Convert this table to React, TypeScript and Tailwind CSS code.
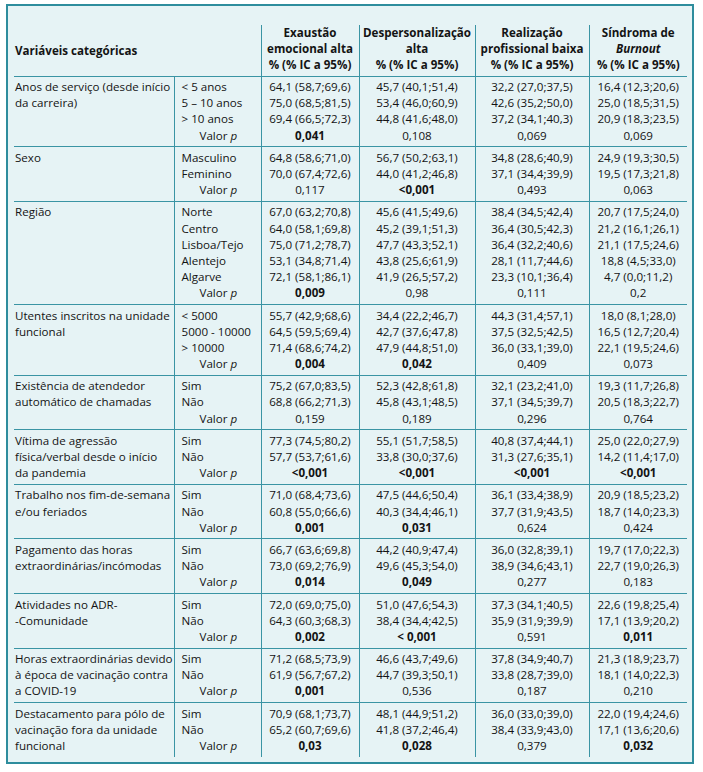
import React from "react";

type V = [string, boolean?];
type Section = {
  label: string[];
  cats: string[];
  vals: string[][]; // per category: 4 values
  p: V[];
};

const sections: Section[] = [
  {
    label: ["Anos de serviço (desde início", "da carreira)"],
    cats: ["< 5 anos", "5 – 10 anos", "> 10 anos"],
    vals: [
      ["64,1 (58,7;69,6)", "45,7 (40,1;51,4)", "32,2 (27,0;37,5)", "16,4 (12,3;20,6)"],
      ["75,0 (68,5;81,5)", "53,4 (46,0;60,9)", "42,6 (35,2;50,0)", "25,0 (18,5;31,5)"],
      ["69,4 (66,5;72,3)", "44,8 (41,6;48,0)", "37,2 (34,1;40,3)", "20,9 (18,3;23,5)"],
    ],
    p: [["0,041", true], ["0,108"], ["0,069"], ["0,069"]],
  },
  {
    label: ["Sexo"],
    cats: ["Masculino", "Feminino"],
    vals: [
      ["64,8 (58,6;71,0)", "56,7 (50,2;63,1)", "34,8 (28,6;40,9)", "24,9 (19,3;30,5)"],
      ["70,0 (67,4;72,6)", "44,0 (41,2;46,8)", "37,1 (34,4;39,9)", "19,5 (17,3;21,8)"],
    ],
    p: [["0,117"], ["<0,001", true], ["0,493"], ["0,063"]],
  },
  {
    label: ["Região"],
    cats: ["Norte", "Centro", "Lisboa/Tejo", "Alentejo", "Algarve"],
    vals: [
      ["67,0 (63,2;70,8)", "45,6 (41,5;49,6)", "38,4 (34,5;42,4)", "20,7 (17,5;24,0)"],
      ["64,0 (58,1;69,8)", "45,2 (39,1;51,3)", "36,4 (30,5;42,3)", "21,2 (16,1;26,1)"],
      ["75,0 (71,2;78,7)", "47,7 (43,3;52,1)", "36,4 (32,2;40,6)", "21,1 (17,5;24,6)"],
      ["53,1 (34,8;71,4)", "43,8 (25,6;61,9)", "28,1 (11,7;44,6)", "18,8 (4,5;33,0)"],
      ["72,1 (58,1;86,1)", "41,9 (26,5;57,2)", "23,3 (10,1;36,4)", "4,7 (0,0;11,2)"],
    ],
    p: [["0,009", true], ["0,98"], ["0,111"], ["0,2"]],
  },
  {
    label: ["Utentes inscritos na unidade", "funcional"],
    cats: ["< 5000", "5000 - 10000", "> 10000"],
    vals: [
      ["55,7 (42,9;68,6)", "34,4 (22,2;46,7)", "44,3 (31,4;57,1)", "18,0 (8,1;28,0)"],
      ["64,5 (59,5;69,4)", "42,7 (37,6;47,8)", "37,5 (32,5;42,5)", "16,5 (12,7;20,4)"],
      ["71,4 (68,6;74,2)", "47,9 (44,8;51,0)", "36,0 (33,1;39,0)", "22,1 (19,5;24,6)"],
    ],
    p: [["0,004", true], ["0,042", true], ["0,409"], ["0,073"]],
  },
  {
    label: ["Existência de atendedor", "automático de chamadas"],
    cats: ["Sim", "Não"],
    vals: [
      ["75,2 (67,0;83,5)", "52,3 (42,8;61,8)", "32,1 (23,2;41,0)", "19,3 (11,7;26,8)"],
      ["68,8 (66,2;71,3)", "45,8 (43,1;48,5)", "37,1 (34,5;39,7)", "20,5 (18,3;22,7)"],
    ],
    p: [["0,159"], ["0,189"], ["0,296"], ["0,764"]],
  },
  {
    label: ["Vítima de agressão", "física/verbal desde o início", "da pandemia"],
    cats: ["Sim", "Não"],
    vals: [
      ["77,3 (74,5;80,2)", "55,1 (51,7;58,5)", "40,8 (37,4;44,1)", "25,0 (22,0;27,9)"],
      ["57,7 (53,7;61,6)", "33,8 (30,0;37,6)", "31,3 (27,6;35,1)", "14,2 (11,4;17,0)"],
    ],
    p: [["<0,001", true], ["<0,001", true], ["<0,001", true], ["<0,001", true]],
  },
  {
    label: ["Trabalho nos fim-de-semana", "e/ou feriados"],
    cats: ["Sim", "Não"],
    vals: [
      ["71,0 (68,4;73,6)", "47,5 (44,6;50,4)", "36,1 (33,4;38,9)", "20,9 (18,5;23,2)"],
      ["60,8 (55,0;66,6)", "40,3 (34,4;46,1)", "37,7 (31,9;43,5)", "18,7 (14,0;23,3)"],
    ],
    p: [["0,001", true], ["0,031", true], ["0,624"], ["0,424"]],
  },
  {
    label: ["Pagamento das horas", "extraordinárias/incómodas"],
    cats: ["Sim", "Não"],
    vals: [
      ["66,7 (63,6;69,8)", "44,2 (40,9;47,4)", "36,0 (32,8;39,1)", "19,7 (17,0;22,3)"],
      ["73,0 (69,2;76,9)", "49,6 (45,3;54,0)", "38,9 (34,6;43,1)", "22,7 (19,0;26,3)"],
    ],
    p: [["0,014", true], ["0,049", true], ["0,277"], ["0,183"]],
  },
  {
    label: ["Atividades no ADR-", "-Comunidade"],
    cats: ["Sim", "Não"],
    vals: [
      ["72,0 (69,0;75,0)", "51,0 (47,6;54,3)", "37,3 (34,1;40,5)", "22,6 (19,8;25,4)"],
      ["64,3 (60,3;68,3)", "38,4 (34,4;42,5)", "35,9 (31,9;39,9)", "17,1 (13,9;20,2)"],
    ],
    p: [["0,002", true], ["< 0,001", true], ["0,591"], ["0,011", true]],
  },
  {
    label: ["Horas extraordinárias devido", "à época de vacinação contra", "a COVID-19"],
    cats: ["Sim", "Não"],
    vals: [
      ["71,2 (68,5;73,9)", "46,6 (43,7;49,6)", "37,8 (34,9;40,7)", "21,3 (18,9;23,7)"],
      ["61,9 (56,7;67,2)", "44,7 (39,3;50,1)", "33,8 (28,7;39,0)", "18,1 (14,0;22,3)"],
    ],
    p: [["0,001", true], ["0,536"], ["0,187"], ["0,210"]],
  },
  {
    label: ["Destacamento para pólo de", "vacinação fora da unidade", "funcional"],
    cats: ["Sim", "Não"],
    vals: [
      ["70,9 (68,1;73,7)", "48,1 (44,9;51,2)", "36,0 (33,0;39,0)", "22,0 (19,4;24,6)"],
      ["65,2 (60,7;69,6)", "41,8 (37,2;46,4)", "38,4 (33,9;43,0)", "17,1 (13,6;20,6)"],
    ],
    p: [["0,03", true], ["0,028", true], ["0,379"], ["0,032", true]],
  },
];

const Line = ({ children, className = "" }: { children: React.ReactNode; className?: string }) => (
  <div className={"leading-[16.2px] h-[16.2px] whitespace-nowrap " + className}>{children}</div>
);

export default function App() {
  return (
    <div className="bg-white w-[703px] h-[772px] pt-[4px] pl-[6px]" style={{ fontFamily: '"Open Sans", "Noto Sans", sans-serif' }}>
      <div className="w-[688px] h-[760px] border-2 border-[#2e8d9d] bg-[#e6f3f5] pt-[19px] pl-[6px] pr-[5px] text-[11.6px] text-[#141414]">
        <table className="table-fixed border-collapse w-[673px]">
          <colgroup>
            <col className="w-[160px]" />
            <col className="w-[87px]" />
            <col className="w-[98px]" />
            <col className="w-[116px]" />
            <col className="w-[114px]" />
            <col className="w-[98px]" />
          </colgroup>
          <thead>
            <tr className="border-b border-[#3a94a4]">
              <th colSpan={2} className="text-left align-middle font-bold pl-[1px] pt-[1px]">
                <Line>Variáveis categóricas</Line>
              </th>
              <th className="border-l border-[#3a94a4] align-bottom font-bold pb-[2px] text-center">
                <Line>Exaustão</Line>
                <Line>emocional alta</Line>
                <Line>% (% IC a 95%)</Line>
              </th>
              <th className="border-l border-[#3a94a4] align-bottom font-bold pb-[2px] text-center">
                <Line>Despersonalização</Line>
                <Line>alta</Line>
                <Line>% (% IC a 95%)</Line>
              </th>
              <th className="border-l border-[#3a94a4] align-bottom font-bold pb-[2px] text-center">
                <Line>Realização</Line>
                <Line>profissional baixa</Line>
                <Line>% (% IC a 95%)</Line>
              </th>
              <th className="border-l border-[#3a94a4] align-bottom font-bold pb-[2px] text-center">
                <Line>Síndroma de</Line>
                <Line><i>Burnout</i></Line>
                <Line>% (% IC a 95%)</Line>
              </th>
            </tr>
          </thead>
          <tbody>
            {sections.map((s, si) => (
              <tr key={si} className={si > 0 ? "border-t border-[#3a94a4]" : ""}>
                <td className="align-top pl-[1px] pt-[2.5px] pb-[2.5px]">
                  {s.label.map((l, i) => (
                    <Line key={i}>{l}</Line>
                  ))}
                </td>
                <td className="align-top border-l border-[#3a94a4] pl-[7px] pt-[2.5px] pb-[2.5px]">
                  {s.cats.map((c, i) => (
                    <Line key={i}>{c}</Line>
                  ))}
                  <Line className="pl-[18px]">
                    Valor <i>p</i>
                  </Line>
                </td>
                {[0, 1, 2, 3].map((ci) => (
                  <td key={ci} className="align-top border-l border-[#3a94a4] text-center pt-[2.5px] pb-[2.5px]">
                    {s.vals.map((row, ri) => (
                      <Line key={ri}>{row[ci]}</Line>
                    ))}
                    <Line className={s.p[ci][1] ? "font-bold" : ""}>{s.p[ci][0]}</Line>
                  </td>
                ))}
              </tr>
            ))}
          </tbody>
        </table>
      </div>
    </div>
  );
}
